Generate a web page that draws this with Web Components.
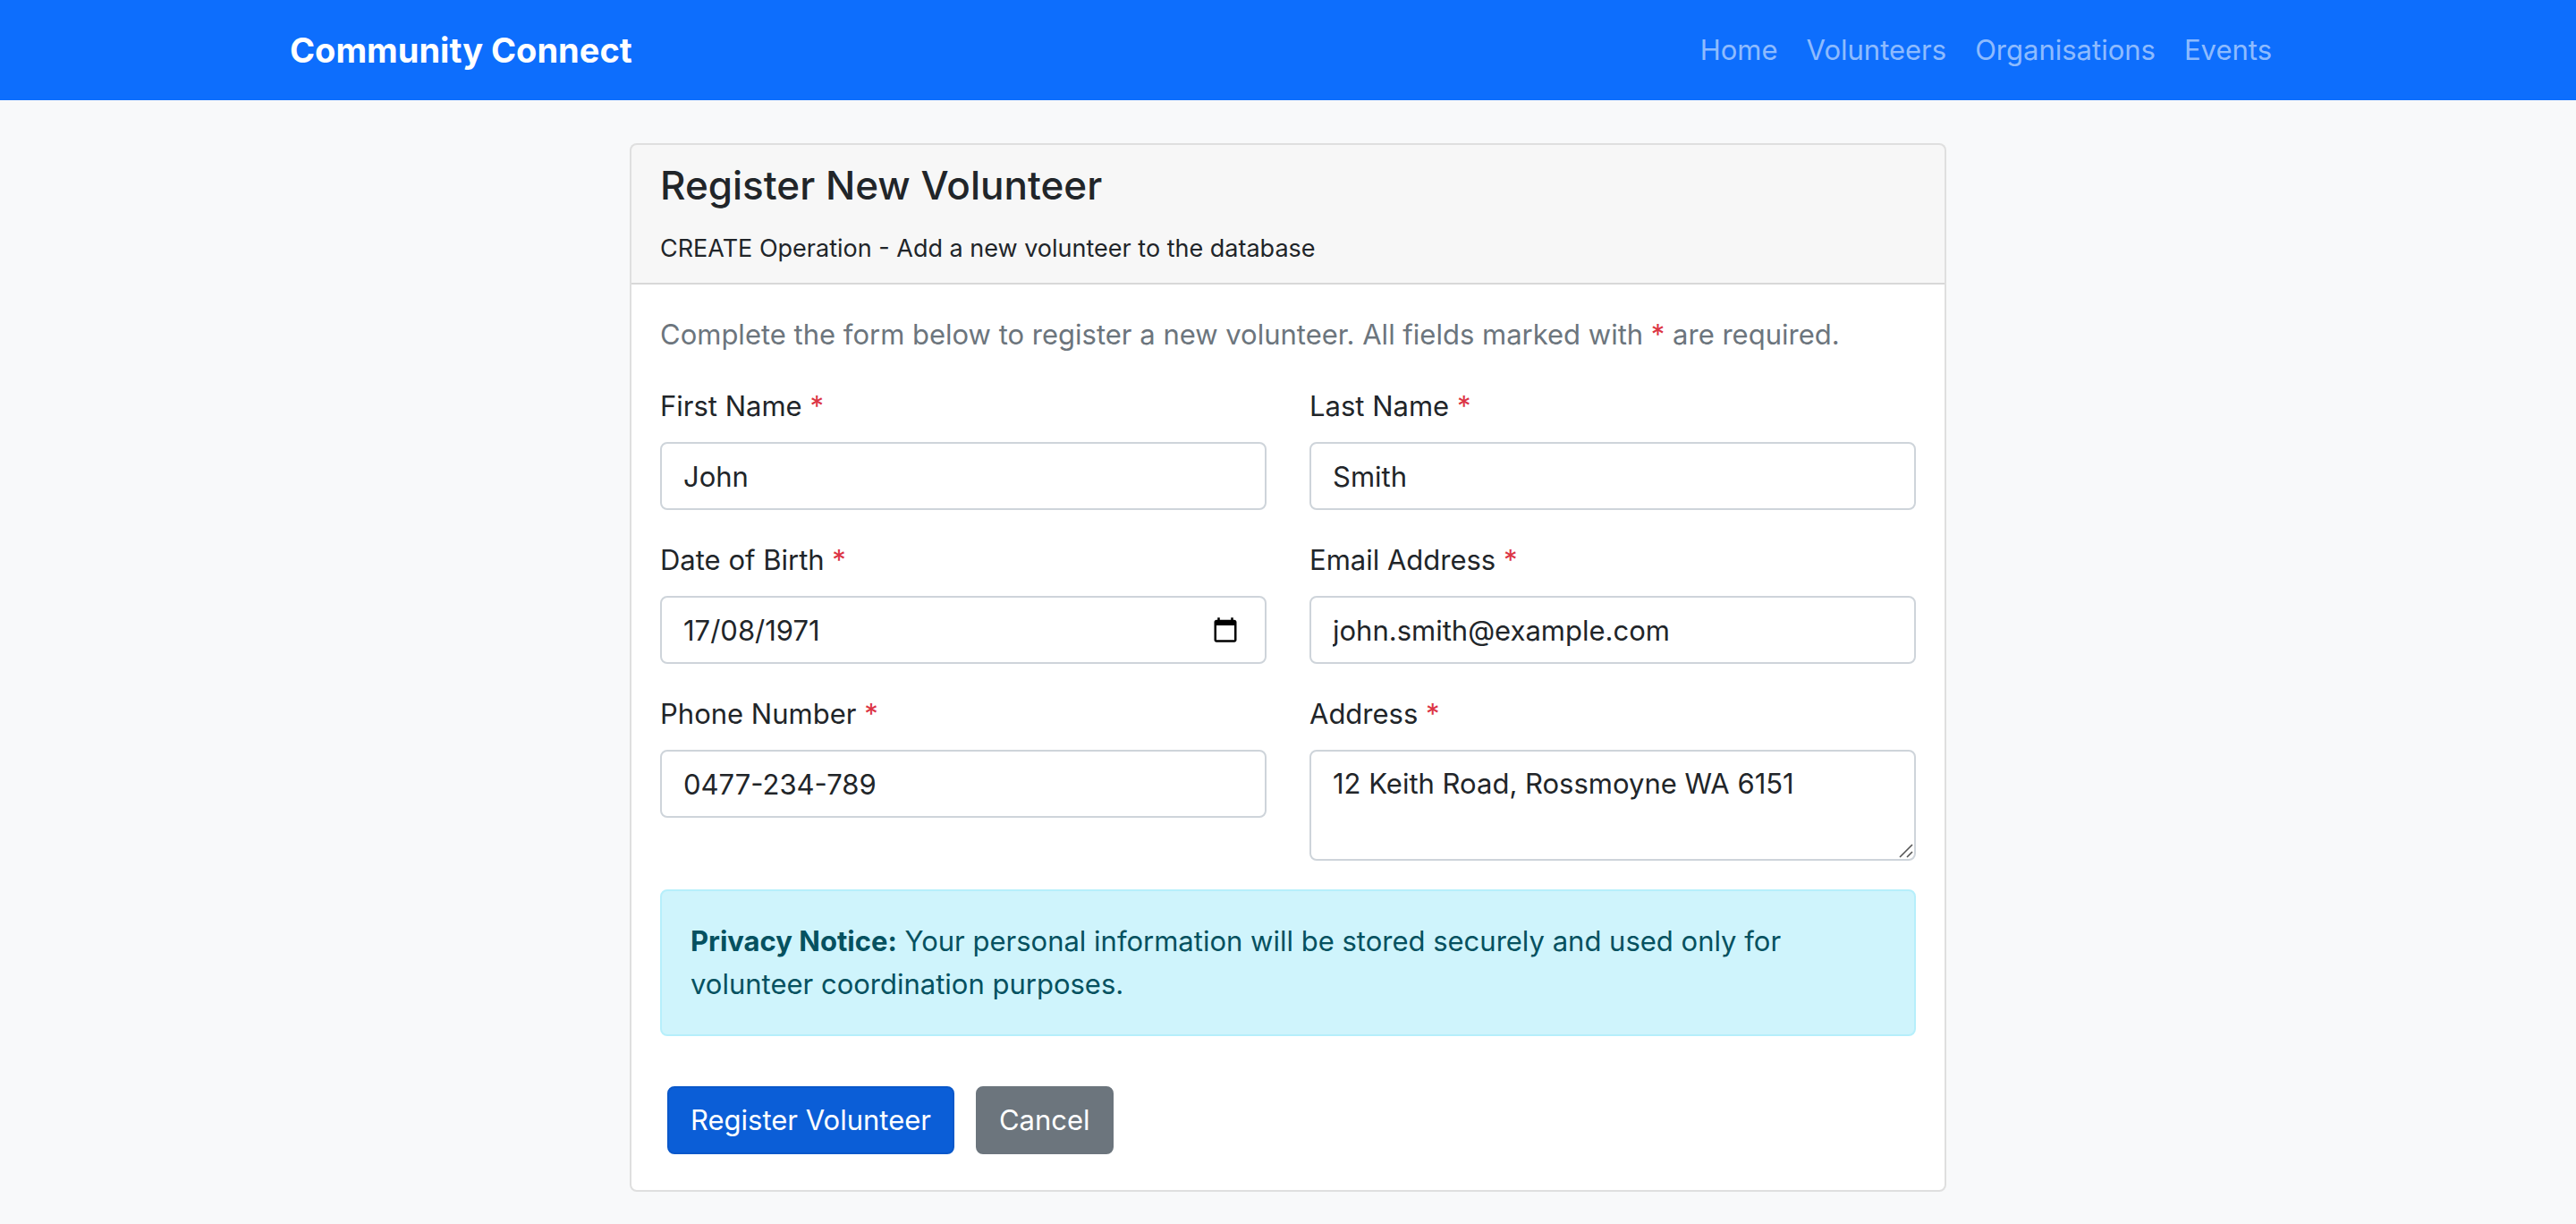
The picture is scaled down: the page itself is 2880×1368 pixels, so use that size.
<!DOCTYPE html>
<html lang="en-AU">
<head>
<meta charset="utf-8">
<meta name="viewport" content="width=device-width, initial-scale=1">
<title>Register New Volunteer</title>
<style>
  :root {
    --text: 31px;
    --line: 48px;
    --ink: #212529;
    --muted: #6c757d;
    --danger: #dc3545;
    --radius: 8px;
  }
  body {
    margin: 0;
    background: #f8f9fa;
    color: var(--ink);
    font: 400 var(--text)/var(--line) Inter, "Liberation Sans", sans-serif;
  }
</style>
</head>
<body>
<cc-navbar brand="Community Connect">
  <cc-nav-link href="#home">Home</cc-nav-link>
  <cc-nav-link href="#volunteers">Volunteers</cc-nav-link>
  <cc-nav-link href="#organisations">Organisations</cc-nav-link>
  <cc-nav-link href="#events">Events</cc-nav-link>
</cc-navbar>
<cc-page>
  <cc-card>
    <span slot="title">Register New Volunteer</span>
    <span slot="subtitle">CREATE Operation - Add a new volunteer to the database</span>
    <cc-volunteer-form></cc-volunteer-form>
  </cc-card>
</cc-page>

<script>
const define = (name, html, setup) => {
  const template = document.createElement('template');
  template.innerHTML = html;
  customElements.define(name, class extends HTMLElement {
    constructor() {
      super();
      this.attachShadow({ mode: 'open' }).append(template.content.cloneNode(true));
    }
    connectedCallback() {
      if (setup) setup(this, this.shadowRoot);
    }
  });
};

define('cc-navbar', `
  <style>
    :host { display: block; background: #0d6efd; }
    header {
      box-sizing: border-box; max-width: 2280px; margin: 0 auto; padding: 16px 24px;
      display: flex; align-items: center; justify-content: space-between; flex-wrap: wrap;
    }
    .brand {
      padding: 10px 0; color: #fff; text-decoration: none;
      font-size: 38px; line-height: 60px; font-weight: 700;
    }
    nav { display: flex; flex-wrap: wrap; }
  </style>
  <header>
    <a class="brand" href="#home"></a>
    <nav aria-label="Main"><slot></slot></nav>
  </header>
`, (host, root) => {
  root.querySelector('.brand').textContent = host.getAttribute('brand');
});

define('cc-nav-link', `
  <style>
    :host { display: block; }
    a { display: block; padding: 16px; color: rgba(255,255,255,.55); text-decoration: none; }
    a:hover { color: rgba(255,255,255,.75); }
  </style>
  <a><slot></slot></a>
`, (host, root) => {
  root.querySelector('a').href = host.getAttribute('href');
});

define('cc-page', `
  <style>
    :host {
      box-sizing: border-box; max-width: 2280px; margin: 48px auto 0; padding: 0 24px 36px;
      display: flex; justify-content: center;
    }
    main { box-sizing: border-box; flex: 0 1 1472px; min-width: 0; }
  </style>
  <main><slot></slot></main>
`);

define('cc-card', `
  <style>
    :host {
      display: block; background: #fff; background-clip: border-box;
      border: 2px solid rgba(0,0,0,.125); border-radius: var(--radius);
    }
    .head {
      padding: 16px 32px; background: rgba(0,0,0,.03);
      border-bottom: 2px solid rgba(0,0,0,.125);
      border-radius: 6px 6px 0 0;
    }
    h1 { margin: 0 0 16px; font-size: 44px; line-height: 58px; font-weight: 500; }
    p { margin: 0; }
    small { font-size: 27px; line-height: 42px; }
    .body { padding: 32px; }
  </style>
  <div class="head">
    <h1><slot name="title"></slot></h1>
    <p><small><slot name="subtitle"></slot></small></p>
  </div>
  <div class="body"><slot></slot></div>
`);

define('cc-field', `
  <style>
    :host { display: block; }
    label { display: block; margin-bottom: 16px; }
    .star { color: var(--danger); }
    .control { display: grid; position: relative; }
    input, textarea {
      box-sizing: border-box; width: 100%; margin: 0; padding: 12px 24px;
      border: 2px solid #ced4da; border-radius: var(--radius);
      background: #fff; color: var(--ink); font: inherit; outline: none;
    }
    input { height: 76px; }
    textarea { height: 124px; resize: vertical; overflow: hidden; }
    textarea::-webkit-resizer { display: none; }
    input:focus, textarea:focus { border-color: #86b7fe; }
    .picker {
      position: absolute; right: 30px; top: 0; bottom: 0; margin: auto 0;
      width: 32px; height: 32px; padding: 0; border: 0; background: none; color: #000;
      display: grid; place-items: center; cursor: pointer;
    }
    .grip { position: absolute; right: 3px; bottom: 3px; pointer-events: none; }
  </style>
  <label for="control"><slot></slot> <span class="star">*</span></label>
  <div class="control"></div>
`, (host, root) => {
  const type = host.getAttribute('type') || 'text';
  const box = root.querySelector('.control');
  const control = document.createElement(type === 'textarea' ? 'textarea' : 'input');
  if (type === 'date') {
    control.type = 'text';
    control.inputMode = 'numeric';
  } else if (type !== 'textarea') {
    control.type = type;
  }
  control.id = 'control';
  control.required = true;
  control.name = host.getAttribute('name');
  control.value = host.getAttribute('value');
  box.replaceChildren(control);
  if (type === 'date') {
    box.insertAdjacentHTML('beforeend', `
      <button class="picker" type="button" aria-label="Open calendar">
        <svg width="30" height="30" viewBox="0 0 24 24" fill="currentColor" aria-hidden="true">
          <path d="M20 3h-1V1h-2v2H7V1H5v2H4c-1.1 0-2 .9-2 2v16c0 1.1.9 2 2 2h16c1.1 0 2-.9 2-2V5c0-1.1-.9-2-2-2zm0 18H4V8h16v13z"/>
        </svg>
      </button>`);
  }
  if (type === 'textarea') {
    box.insertAdjacentHTML('beforeend', `
      <svg class="grip" width="16" height="16" viewBox="0 0 16 16" fill="none" stroke="#555" stroke-width="1.6" aria-hidden="true">
        <path d="M1 15 15 1M9 15l6-6"/>
      </svg>`);
  }
});

define('cc-alert', `
  <style>
    :host {
      display: block; padding: 32px; color: #055160; background: #cff4fc;
      border: 2px solid #b6effb; border-radius: var(--radius);
    }
  </style>
  <slot></slot>
`);

define('cc-button', `
  <style>
    :host { display: block; --fill: #6c757d; --edge: #6c757d; }
    :host([variant="primary"]) { --fill: #0b5ed7; --edge: #0a58ca; }
    button {
      display: block; margin: 0; padding: 12px 24px; font: inherit; color: #fff; cursor: pointer;
      background: var(--fill); border: 2px solid var(--edge); border-radius: var(--radius);
    }
  </style>
  <button type="button"><slot></slot></button>
`);

define('cc-volunteer-form', `
  <style>
    :host { display: block; }
    .intro { margin: 0 0 32px; color: var(--muted); }
    .intro span { color: var(--danger); }
    .fields { display: grid; grid-template-columns: repeat(2, minmax(0, 1fr)); gap: 32px 48px; margin-bottom: 32px; }
    strong { font-weight: 700; }
    .actions { display: flex; flex-wrap: wrap; gap: 24px; margin: 56px 8px 8px; }
  </style>
  <form>
    <p class="intro">Complete the form below to register a new volunteer. All fields marked with <span>*</span> are required.</p>
    <div class="fields">
      <cc-field name="first_name" value="John">First Name</cc-field>
      <cc-field name="last_name" value="Smith">Last Name</cc-field>
      <cc-field name="dob" type="date" value="17/08/1971">Date of Birth</cc-field>
      <cc-field name="email" type="email" value="john.smith@example.com">Email Address</cc-field>
      <cc-field name="phone" type="tel" value="0477-234-789">Phone Number</cc-field>
      <cc-field name="address" type="textarea" value="12 Keith Road, Rossmoyne WA 6151">Address</cc-field>
    </div>
    <cc-alert><strong>Privacy Notice:</strong> Your personal information will be stored securely and used only for volunteer coordination purposes.</cc-alert>
    <div class="actions">
      <cc-button variant="primary">Register Volunteer</cc-button>
      <cc-button>Cancel</cc-button>
    </div>
  </form>
`);
</script>
</body>
</html>
